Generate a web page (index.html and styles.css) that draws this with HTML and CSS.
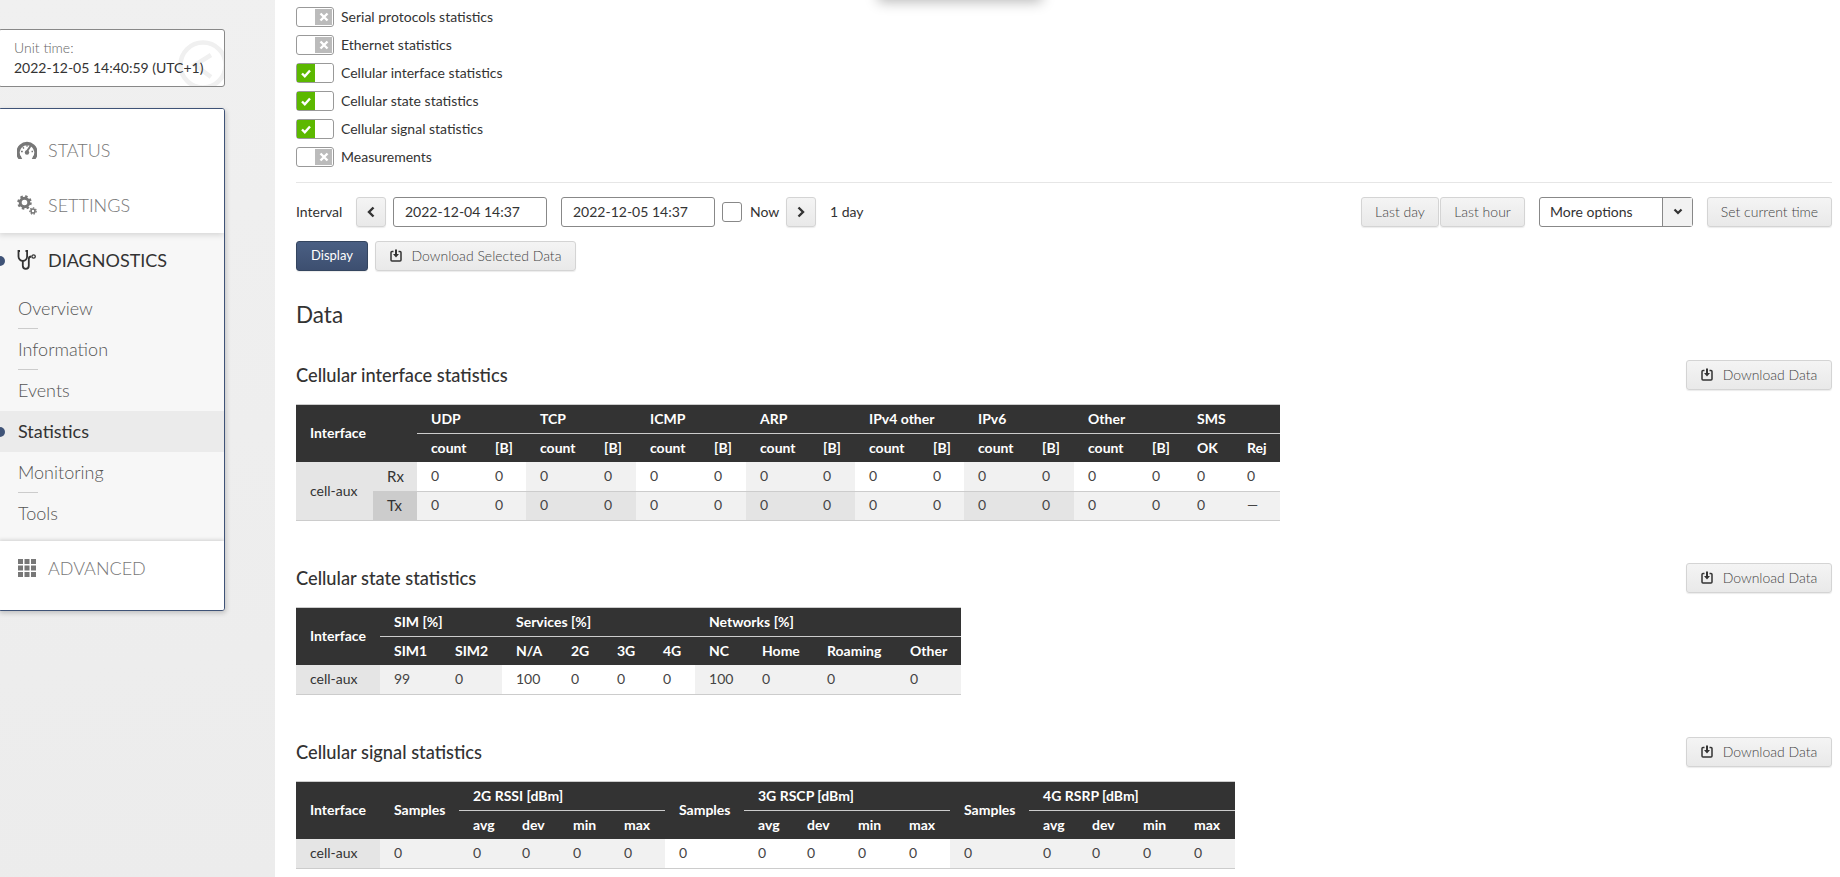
FILE: index.html
```html
<!DOCTYPE html>
<html lang="en">
<head>
<meta charset="utf-8">
<title>Statistics</title>
<link rel="stylesheet" href="styles.css">
</head>
<body>
<svg class="defs" width="0" height="0" aria-hidden="true">
  <symbol id="dl" viewBox="0 0 12 13">
    <path d="M3.5 2.5H2a1 1 0 0 0-1 1V11a1 1 0 0 0 1 1h8a1 1 0 0 0 1-1V3.500a1 1 0 0 0-1-1H8.500" fill="none" stroke="currentColor" stroke-width="1.500"/>
    <path d="M5 0.500h2v4.500h2L6 8.500 3 5h2z" fill="currentColor"/>
  </symbol>
  <symbol id="chk" viewBox="0 0 12 12">
    <path d="M2 6.500l2.800 2.800L10 3.500" fill="none" stroke="#fff" stroke-width="2.400"/>
  </symbol>
  <symbol id="xx" viewBox="0 0 12 12">
    <path d="M2.500 2.500l7 7M9.500 2.500l-7 7" fill="none" stroke="#fff" stroke-width="2.400"/>
  </symbol>
</svg>
<div class="page">
  <aside class="side">
    <div class="unit">
      <span class="unit-label">Unit time:</span>
      <span class="unit-value">2022-12-05 14:40:59 (UTC+1)</span>
      <svg class="unit-mark" width="52" height="52" viewBox="0 0 52 52"><circle cx="26" cy="26" r="22.500" fill="none" stroke="#f0f0f0" stroke-width="4.500"/><path d="M34 16L18 26l16 12" fill="none" stroke="#f0f0f0" stroke-width="4.500"/></svg>
    </div>
    <nav class="menu">
      <div class="group first">
        <a class="top-item">
          <svg class="ico" width="20" height="18" viewBox="0 0 20 18"><path d="M4.500 16.500L3 17.200A9 9 0 1 1 17 17.200L15.500 16.500" fill="none" stroke="#777" stroke-width="3.400"/><path d="M9.500 11L13.500 5" stroke="#777" stroke-width="2"/><circle cx="10" cy="11.500" r="2.200" fill="#777"/><path d="M4 10.500h1.800M5.800 6.300l1.200 1.200M10 4v1.800M14.500 10.500h1.500" stroke="#777" stroke-width="1.300"/></svg>
          <span>STATUS</span>
        </a>
        <a class="top-item">
          <svg class="ico" width="20" height="20" viewBox="0 0 20 20"><circle cx="7.500" cy="7.500" r="4.300" fill="none" stroke="#777" stroke-width="3"/><circle cx="7.500" cy="7.500" r="6" fill="none" stroke="#777" stroke-width="2.500" stroke-dasharray="2.400 2.300"/><circle cx="16" cy="16" r="2" fill="none" stroke="#777" stroke-width="1.600"/><circle cx="16" cy="16" r="3.200" fill="none" stroke="#777" stroke-width="1.200" stroke-dasharray="1.500 1.400"/></svg>
          <span>SETTINGS</span>
        </a>
      </div>
      <div class="group open">
        <a class="top-item current">
          <i class="dot"></i>
          <svg class="ico" width="20" height="20" viewBox="0 0 20 20"><path d="M3 1H1.500V6.500a4.300 4.300 0 0 0 8.600 0V1H8.500" fill="none" stroke="#333" stroke-width="1.800"/><path d="M5.800 10.500V15.800a3 3 0 0 0 6 0V9a2.500 2.500 0 0 1 2.500-2.500" fill="none" stroke="#333" stroke-width="1.800"/><circle cx="16.600" cy="6.500" r="1.700" fill="none" stroke="#333" stroke-width="1.300"/></svg>
          <span>DIAGNOSTICS</span>
        </a>
        <a class="sub sep">Overview</a>
        <a class="sub sep">Information</a>
        <a class="sub">Events</a>
        <a class="sub active"><i class="dot"></i>Statistics</a>
        <a class="sub sep">Monitoring</a>
        <a class="sub">Tools</a>
      </div>
      <div class="group last">
        <a class="top-item">
          <svg class="ico" width="18" height="18" viewBox="0 0 18 18" fill="#777"><rect width="5" height="5"/><rect x="6.500" width="5" height="5"/><rect x="13" width="5" height="5"/><rect y="6.500" width="5" height="5"/><rect x="6.500" y="6.500" width="5" height="5"/><rect x="13" y="6.500" width="5" height="5"/><rect y="13" width="5" height="5"/><rect x="6.500" y="13" width="5" height="5"/><rect x="13" y="13" width="5" height="5"/></svg>
          <span>ADVANCED</span>
        </a>
      </div>
    </nav>
  </aside>

  <main class="main">
    <div class="clipped-shadow"></div>
    <div class="toggles">
      <label class="toggle-row"><span class="toggle off"><b></b><b><svg width="12" height="12"><use href="#xx"/></svg></b></span>Serial protocols statistics</label>
      <label class="toggle-row"><span class="toggle off"><b></b><b><svg width="12" height="12"><use href="#xx"/></svg></b></span>Ethernet statistics</label>
      <label class="toggle-row"><span class="toggle on"><b><svg width="12" height="12"><use href="#chk"/></svg></b><b></b></span>Cellular interface statistics</label>
      <label class="toggle-row"><span class="toggle on"><b><svg width="12" height="12"><use href="#chk"/></svg></b><b></b></span>Cellular state statistics</label>
      <label class="toggle-row"><span class="toggle on"><b><svg width="12" height="12"><use href="#chk"/></svg></b><b></b></span>Cellular signal statistics</label>
      <label class="toggle-row"><span class="toggle off"><b></b><b><svg width="12" height="12"><use href="#xx"/></svg></b></span>Measurements</label>
    </div>
    <hr class="rule">
    <div class="interval">
      <div class="interval-left">
        <span class="int-label">Interval</span>
        <button class="btn icon-btn"><svg width="10" height="12" viewBox="0 0 10 12"><path d="M7.500 1.500L3 6l4.500 4.500" fill="none" stroke="#333" stroke-width="2.400"/></svg></button>
        <span class="field">2022-12-04 14:37</span>
        <span class="field second">2022-12-05 14:37</span>
        <span class="check"></span>
        <span class="now">Now</span>
        <button class="btn icon-btn next"><svg width="10" height="12" viewBox="0 0 10 12"><path d="M2.500 1.500L7 6l-4.500 4.500" fill="none" stroke="#333" stroke-width="2.400"/></svg></button>
        <span class="span-label">1 day</span>
      </div>
      <div class="interval-right">
        <div class="pair"><button class="btn b-day">Last day</button><button class="btn b-hour">Last hour</button></div>
        <div class="select"><span class="select-text">More options</span><span class="select-arrow"><svg width="10" height="8" viewBox="0 0 10 8"><path d="M1.500 1.500L5 5l3.500-3.500" fill="none" stroke="#333" stroke-width="2.200"/></svg></span></div>
        <button class="btn b-set">Set current time</button>
      </div>
    </div>
    <div class="actions">
      <button class="btn primary">Display</button>
      <button class="btn dl-wide"><svg class="dl" width="12" height="13"><use href="#dl"/></svg>Download Selected Data</button>
    </div>
    <h2 class="data-title">Data</h2>

    <section class="sec">
      <header class="sec-head">
        <h3>Cellular interface statistics</h3>
        <button class="btn dl-data"><svg class="dl" width="12" height="13"><use href="#dl"/></svg>Download Data</button>
      </header>
      <table class="stat t1">
        <colgroup>
          <col width="77"><col width="44">
          <col width="64"><col width="45"><col width="64"><col width="46"><col width="64"><col width="46"><col width="63"><col width="46"><col width="64"><col width="45"><col width="64"><col width="46"><col width="64"><col width="45"><col width="50"><col width="47">
        </colgroup>
        <thead>
          <tr>
            <th colspan="2" rowspan="2">Interface</th>
            <th colspan="2" class="gh">UDP</th><th colspan="2" class="gh">TCP</th><th colspan="2" class="gh">ICMP</th><th colspan="2" class="gh">ARP</th><th colspan="2" class="gh">IPv4 other</th><th colspan="2" class="gh">IPv6</th><th colspan="2" class="gh">Other</th><th colspan="2" class="gh">SMS</th>
          </tr>
          <tr>
            <th>count</th><th>[B]</th><th>count</th><th>[B]</th><th>count</th><th>[B]</th><th>count</th><th>[B]</th><th>count</th><th>[B]</th><th>count</th><th>[B]</th><th>count</th><th>[B]</th><th>OK</th><th>Rej</th>
          </tr>
        </thead>
        <tbody>
          <tr>
            <td rowspan="2" class="rh">cell-aux</td><td class="rx">Rx</td>
            <td class="w">0</td><td class="w">0</td><td class="g">0</td><td class="g">0</td><td class="w">0</td><td class="w">0</td><td class="g">0</td><td class="g">0</td><td class="w">0</td><td class="w">0</td><td class="g">0</td><td class="g">0</td><td class="w">0</td><td class="w">0</td><td class="w">0</td><td class="w">0</td>
          </tr>
          <tr class="tight">
            <td class="tx">Tx</td>
            <td class="g">0</td><td class="g">0</td><td class="d">0</td><td class="d">0</td><td class="g">0</td><td class="g">0</td><td class="d">0</td><td class="d">0</td><td class="g">0</td><td class="g">0</td><td class="d">0</td><td class="d">0</td><td class="g">0</td><td class="g">0</td><td class="g">0</td><td class="g">—</td>
          </tr>
        </tbody>
      </table>
    </section>

    <section class="sec">
      <header class="sec-head">
        <h3>Cellular state statistics</h3>
        <button class="btn dl-data"><svg class="dl" width="12" height="13"><use href="#dl"/></svg>Download Data</button>
      </header>
      <table class="stat t2">
        <colgroup>
          <col width="84"><col width="61"><col width="61"><col width="55"><col width="46"><col width="46"><col width="46"><col width="53"><col width="65"><col width="83"><col width="65">
        </colgroup>
        <thead>
          <tr>
            <th rowspan="2">Interface</th>
            <th colspan="2" class="gh">SIM [%]</th><th colspan="4" class="gh">Services [%]</th><th colspan="4" class="gh">Networks [%]</th>
          </tr>
          <tr>
            <th>SIM1</th><th>SIM2</th><th>N/A</th><th>2G</th><th>3G</th><th>4G</th><th>NC</th><th>Home</th><th>Roaming</th><th>Other</th>
          </tr>
        </thead>
        <tbody>
          <tr>
            <td class="rh">cell-aux</td>
            <td class="g">99</td><td class="g">0</td><td class="w">100</td><td class="w">0</td><td class="w">0</td><td class="w">0</td><td class="g">100</td><td class="g">0</td><td class="g">0</td><td class="g">0</td>
          </tr>
        </tbody>
      </table>
    </section>

    <section class="sec">
      <header class="sec-head">
        <h3>Cellular signal statistics</h3>
        <button class="btn dl-data"><svg class="dl" width="12" height="13"><use href="#dl"/></svg>Download Data</button>
      </header>
      <table class="stat t3">
        <colgroup>
          <col width="84"><col width="79"><col width="49"><col width="51"><col width="51"><col width="55"><col width="79"><col width="49"><col width="51"><col width="51"><col width="55"><col width="79"><col width="49"><col width="51"><col width="51"><col width="55">
        </colgroup>
        <thead>
          <tr>
            <th rowspan="2">Interface</th>
            <th rowspan="2">Samples</th><th colspan="4" class="gh">2G RSSI [dBm]</th>
            <th rowspan="2">Samples</th><th colspan="4" class="gh">3G RSCP [dBm]</th>
            <th rowspan="2">Samples</th><th colspan="4" class="gh">4G RSRP [dBm]</th>
          </tr>
          <tr>
            <th>avg</th><th>dev</th><th>min</th><th>max</th><th>avg</th><th>dev</th><th>min</th><th>max</th><th>avg</th><th>dev</th><th>min</th><th>max</th>
          </tr>
        </thead>
        <tbody>
          <tr>
            <td class="rh">cell-aux</td>
            <td class="g">0</td><td class="g">0</td><td class="g">0</td><td class="g">0</td><td class="g">0</td>
            <td class="w">0</td><td class="w">0</td><td class="w">0</td><td class="w">0</td><td class="w">0</td>
            <td class="g">0</td><td class="g">0</td><td class="g">0</td><td class="g">0</td><td class="g">0</td>
          </tr>
        </tbody>
      </table>
    </section>
  </main>
</div>
</body>
</html>
```

FILE: styles.css
```css
* { box-sizing: border-box; }
html, body { margin: 0; height: 877px; overflow: hidden; }
body { font-family: Lato, "Liberation Sans", sans-serif; font-size: 14px; color: #333; background: #fff; }
.defs { position: absolute; }
.page { display: flex; height: 877px; overflow: hidden; }

/* sidebar */
.side { width: 275px; flex: none; padding-top: 29px; background: linear-gradient(175deg, #f0f0f0 0%, #ececec 100%); }
.unit { position: relative; width: 227px; height: 58px; margin-left: -2px; padding: 8px 0 0 15px; background: #fff; border: 1px solid #888; border-radius: 3px; overflow: hidden; display: flex; flex-direction: column; }
.unit-label { font-size: 14px; line-height: 20px; color: #666; font-weight: 300; }
.unit-value { position: relative; z-index: 1; font-size: 14px; line-height: 20px; color: #333; white-space: nowrap; }
.unit-mark { position: absolute; left: 178px; top: 9px; }
.menu { width: 227px; margin: 21px 0 0 -2px; height: 503px; border: 1px solid #3f5377; border-radius: 3px; background: #fff; box-shadow: 1px 2px 5px rgba(0,0,0,.2); display: flex; flex-direction: column; overflow: hidden; }
.group.first { padding-top: 14px; position: relative; z-index: 2; background: #fff; box-shadow: 0 2px 6px rgba(0,0,0,.14); }
.group.open { background: #f7f7f7; padding-bottom: 7px; }
.group.last { position: relative; z-index: 2; background: #fff; padding-bottom: 14px; box-shadow: 0 -1px 4px rgba(0,0,0,.16); }
.top-item { position: relative; display: flex; align-items: center; height: 55px; padding: 0 0 2px 18px; font-size: 18px; font-weight: 300; color: #777; }
.top-item .ico { width: 20px; margin-right: 11px; flex: none; }
.top-item.current { color: #333; font-weight: 400; }
.sub { position: relative; display: flex; align-items: center; height: 41px; padding: 0 0 2px 19px; font-size: 18px; font-weight: 300; color: #555; }
.sub.sep::after { content: ""; position: absolute; left: 19px; bottom: 0; width: 20px; height: 1px; background: #ccc; }
.sub.active { background: #ebebeb; color: #333; font-weight: 400; }
.dot { position: absolute; left: -4px; top: 50%; width: 10px; height: 10px; margin-top: -5px; border-radius: 50%; background: #3f5377; }

/* main */
.main { position: relative; flex: 1; padding: 7px 8px 0 21px; min-width: 0; }
.clipped-shadow { position: absolute; left: 603px; top: -20px; width: 164px; height: 20px; background: #fff; box-shadow: 0 2px 13px rgba(0,0,0,.28); }
.toggles { display: flex; flex-direction: column; gap: 8px; }
.toggle-row { display: flex; align-items: center; height: 20px; gap: 7px; font-size: 14px; padding-bottom: 1px; }
.toggle { display: flex; width: 38px; height: 20px; margin-bottom: -1px; padding: 1px; border: 1px solid #999; border-radius: 3px; background: #fff; }
.toggle b { display: flex; flex: 1; align-items: center; justify-content: center; background: #fff; }
.toggle.off b:last-child { background: #bbb; }
.toggle.on { border-color: #999; padding: 0 1px 0 0; }
.toggle.on b:first-child { background: #5cb800; }
.rule { height: 1px; border: 0; margin: 15px 0 14px; background: #e6e6e6; }

.interval { display: flex; justify-content: space-between; height: 30px; }
.interval-left, .interval-right { display: flex; align-items: center; }
.int-label { width: 60px; padding-bottom: 1px; }
.btn { height: 30px; padding: 0 0 2px; border: 1px solid #d4d4d4; border-radius: 3px; background: linear-gradient(#f4f4f4, #e9e9e9); box-shadow: 0 1px 1px rgba(0,0,0,.08); font: 300 14px Lato, "Liberation Sans", sans-serif; color: #444; display: inline-flex; align-items: center; justify-content: center; white-space: nowrap; }
.icon-btn { width: 30px; padding: 0; }
.field { display: flex; align-items: center; width: 154px; height: 30px; margin-left: 7px; padding: 0 0 1px 11px; border: 1px solid #888; border-radius: 3px; font-size: 14px; }
.field.second { margin-left: 14px; }
.check { width: 20px; height: 20px; margin-left: 7px; border: 1px solid #888; border-radius: 3px; }
.now { margin-left: 8px; width: 36px; padding-bottom: 1px; }
.span-label { margin-left: 14px; padding-bottom: 1px; }
.b-day { width: 78px; }
.b-hour { width: 85px; margin-left: 1px; }
.pair { display: flex; }
.select { display: flex; width: 154px; height: 30px; margin-left: 14px; border: 1px solid #888; border-radius: 3px; }
.select-text { flex: 1; padding-left: 10px; line-height: 27px; font-size: 14px; }
.select-arrow { width: 30px; display: flex; align-items: center; justify-content: center; border-left: 1px solid #888; background: #f2f2f2; }
.b-set { width: 125px; margin-left: 14px; }
.actions { display: flex; gap: 7px; margin-top: 14px; }
.primary { width: 72px; background: linear-gradient(#4a5f83, #3d4f70); border-color: #34455f; color: #fff; font-weight: 400; font-size: 13px; }
.dl-wide { width: 201px; }
.dl { margin-right: 10px; color: #333; }
.data-title { margin: 29px 0 30px; font-size: 22.5px; line-height: 30px; font-weight: 400; color: #333; }

/* sections */
.sec { margin-bottom: 42px; }
.sec-head { display: flex; justify-content: space-between; align-items: center; height: 30px; margin-bottom: 14px; }
.sec-head h3 { margin: 0; font-size: 18.25px; font-weight: 500; color: #333; }
.dl-data { width: 146px; font-size: 14px; }
.stat { border-collapse: separate; border-spacing: 0; table-layout: fixed; font-size: 14px; }
.t1 { width: 984px; }
.t2 { width: 665px; }
.t3 { width: 939px; }
.stat th { height: 28px; padding: 0 0 2px 14px; background: #333; color: #fff; font-weight: 700; text-align: left; white-space: nowrap; }
.stat thead tr:first-child th { height: 30px; border-top: 1px solid #ccc; }
.stat th.gh { border-bottom: 1px solid #ccc; }
.stat td { height: 30px; padding: 0 0 2px 14px; border-bottom: 1px solid #ccc; color: #444; white-space: nowrap; }
.stat tr.tight td { height: 29px; padding-bottom: 3px; }
.stat td.w { background: #fff; }
.stat td.g { background: #f1f1f1; }
.stat td.d { background: #e4e4e4; }
.stat td.rh { background: #e5e5e5; color: #333; }
.stat td.rx { background: #e5e5e5; color: #333; font-size: 15px; }
.stat td.tx { background: #ccc; color: #333; font-size: 15px; }
```
